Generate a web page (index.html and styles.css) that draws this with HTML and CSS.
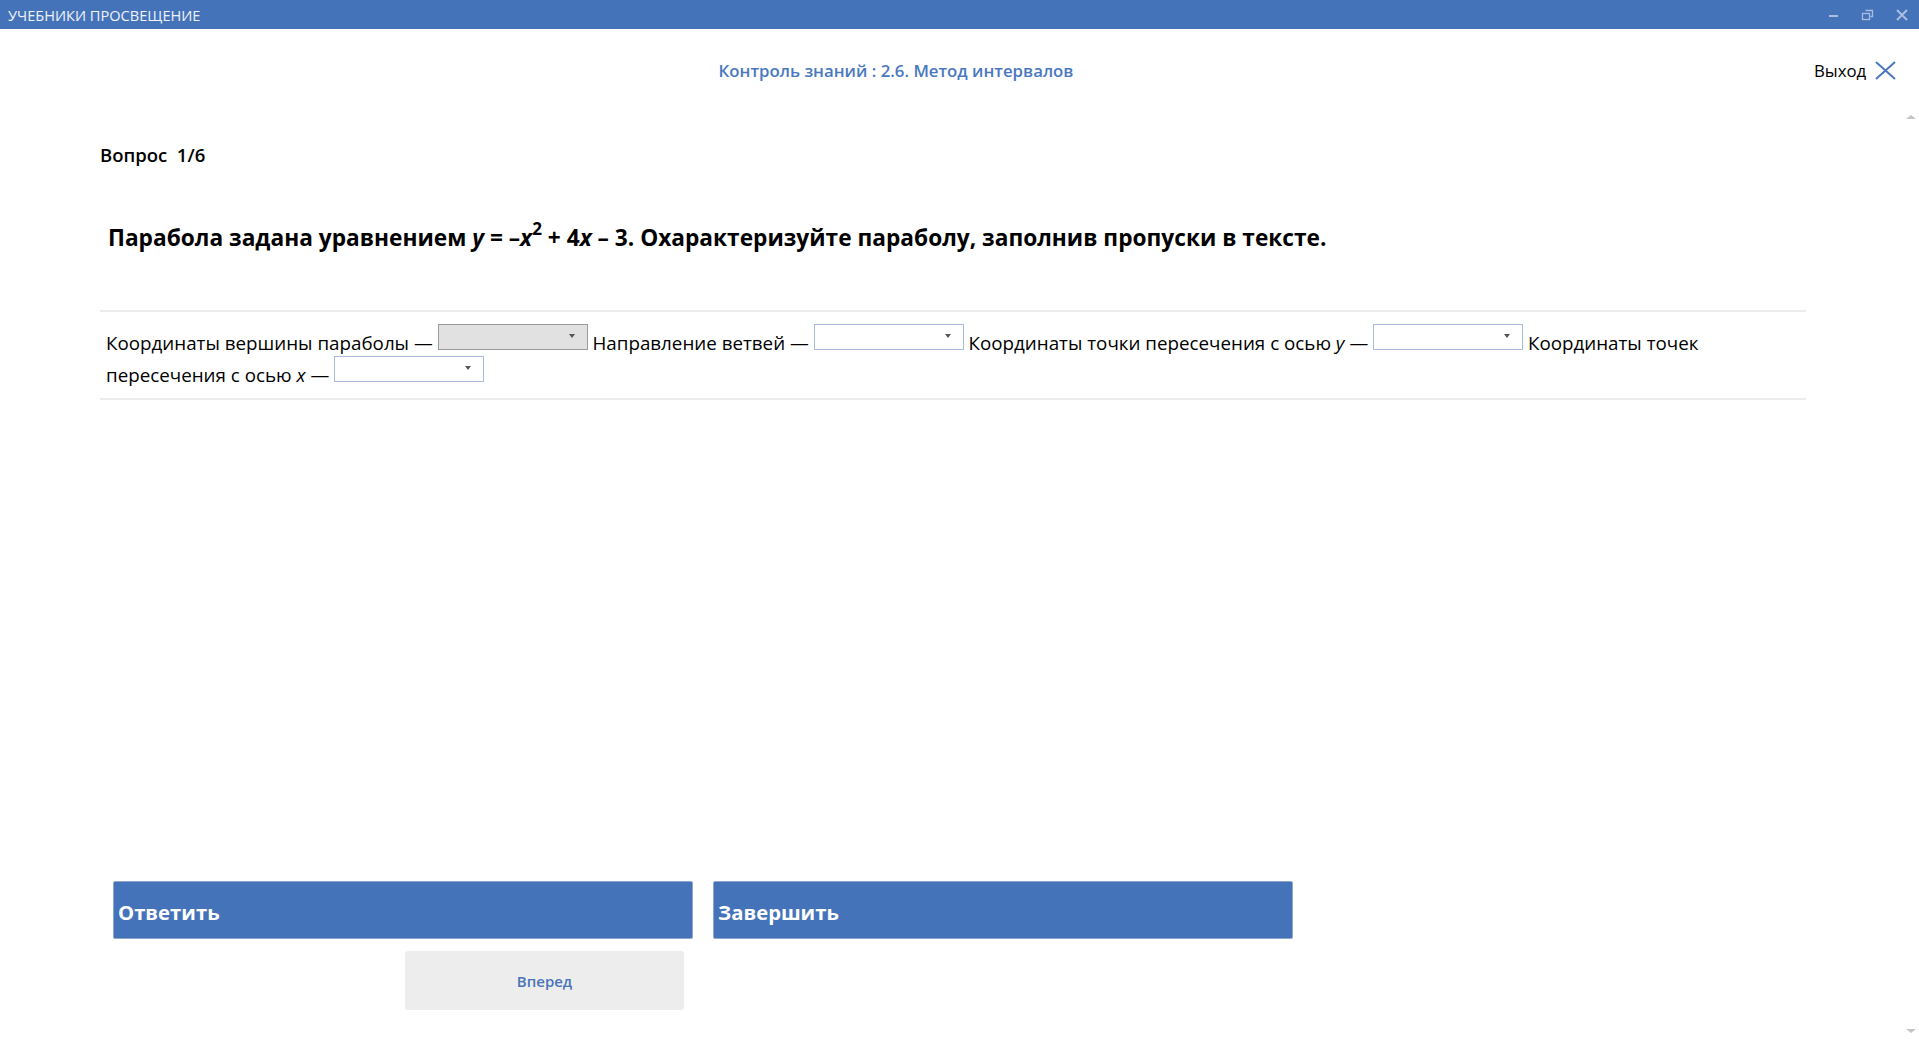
FILE: index.html
```html
<!DOCTYPE html>
<html lang="ru">
<head>
<meta charset="utf-8">
<title>Учебники Просвещение</title>
<link rel="stylesheet" href="styles.css">
</head>
<body>
<div class="app">
  <div class="titlebar">
    <span class="app-name">УЧЕБНИКИ ПРОСВЕЩЕНИЕ</span>
    <div class="win-controls">
      <svg class="wc" width="14" height="14" viewBox="0 0 14 14"><rect x="2" y="7" width="9" height="2" fill="#a9bee0"/></svg>
      <svg class="wc" width="14" height="14" viewBox="0 0 14 14"><path d="M4.5 2.5h7v6h-2" fill="none" stroke="#a9bee0" stroke-width="1.3"/><rect x="1.5" y="5.5" width="7" height="6" fill="none" stroke="#a9bee0" stroke-width="1.3"/></svg>
      <svg class="wc" width="14" height="14" viewBox="0 0 14 14"><path d="M2 2l10 10M12 2L2 12" stroke="#a9bee0" stroke-width="2"/></svg>
    </div>
  </div>

  <div class="header">
    <div class="header-title">Контроль знаний : 2.6. Метод интервалов</div>
    <div class="exit">
      <span>Выход</span>
      <svg width="21" height="19" viewBox="0 0 21 19"><path d="M1 1l19 17M20 1L1 18" stroke="#4a78c0" stroke-width="2" fill="none"/></svg>
    </div>
  </div>

  <main class="content">
    <div class="q-num">Вопрос&nbsp; 1/6</div>
    <div class="q-text">Парабола задана уравнением <i>y</i> = –<i>x</i><sup>2</sup> + 4<i>x</i> – 3. Охарактеризуйте параболу, заполнив пропуски в тексте.</div>
    <div class="fill">Координаты вершины параболы — <span class="sel sel-active"></span> Направление ветвей — <span class="sel"></span> Координаты точки пересечения с осью <i>y</i> — <span class="sel"></span> Координаты точек пересечения с осью <i>x</i> — <span class="sel"></span></div>

    <div class="actions">
      <div class="btn-row">
        <button class="btn-main">Ответить</button>
        <button class="btn-main">Завершить</button>
      </div>
      <button class="btn-next">Вперед</button>
    </div>
  </main>

  <div class="scroll-up"></div>
  <div class="scroll-down"></div>
</div>
</body>
</html>
```

FILE: styles.css
```css
* { box-sizing: border-box; }
html, body { margin: 0; padding: 0; }
body {
  font-family: "Open Sans", "Noto Sans", "DejaVu Sans", sans-serif;
  background: #ffffff;
  color: #000;
}
.app {
  position: relative;
  height: 1040px;
  display: flex;
  flex-direction: column;
  overflow: hidden;
}
.titlebar {
  height: 29px;
  background: #4573b9;
  display: flex;
  align-items: center;
  justify-content: space-between;
  padding: 0 8px 0 8px;
  flex: none;
}
.app-name {
  color: #eef2fa;
  font-size: 14.6px;
}
.win-controls {
  display: flex;
  gap: 20px;
  align-items: center;
  padding-right: 2px;
}
.wc { display: block; }

.header {
  height: 82px;
  display: flex;
  align-items: center;
  flex: none;
}
.header-title {
  width: 1792px;
  text-align: center;
  color: #4a78c0;
  font-size: 16.8px;
  font-weight: 600;
}
.exit {
  display: flex;
  align-items: center;
  gap: 9px;
  margin-left: 22px;
  font-size: 16.8px;
  padding-top: 1px;
}
.exit svg { display: block; }

.content {
  flex: 1;
  display: flex;
  flex-direction: column;
  padding: 0 113px 30px 100px;
}
.q-num {
  margin-top: 32px;
  font-size: 18.5px;
  font-weight: 600;
  line-height: 24px;
}
.q-text {
  margin-top: 56px;
  padding-left: 8px;
  font-size: 22.7px;
  font-weight: 700;
  line-height: 30px;
}
.q-text sup {
  font-size: 17px;
  line-height: 0;
  vertical-align: 11px;
}
.fill {
  margin-top: 57px;
  border-top: 2px solid #ececec;
  border-bottom: 2px solid #ececec;
  padding: 14.5px 0 7.5px 6px;
  font-size: 18.8px;
  line-height: 32px;
}
.sel {
  position: relative;
  display: inline-block;
  width: 150px;
  height: 26px;
  margin-top: -5px;
  border: 1px solid #a9bbdb;
  background: #fff;
  vertical-align: 0;
}
.sel::after {
  content: "";
  position: absolute;
  right: 12px;
  top: 9px;
  border-left: 3px solid transparent;
  border-right: 3px solid transparent;
  border-top: 4px solid #555;
}
.sel-active {
  background: #e1e1e1;
  border-color: #9a9a9a;
}

.actions {
  margin-top: auto;
  padding-left: 13px;
  display: flex;
  flex-direction: column;
  gap: 12px;
}
.btn-row {
  display: flex;
  gap: 20px;
}
.btn-main {
  width: 580px;
  height: 58px;
  background: #4573b9;
  border: 1px solid #8ea6cc;
  border-radius: 2px;
  color: #fff;
  font-family: inherit;
  font-size: 20.3px;
  font-weight: 700;
  text-align: left;
  padding: 4px 0 0 4px;
}
.btn-next {
  margin-left: 292px;
  width: 279px;
  height: 59px;
  background: #ededed;
  border: none;
  border-radius: 3px;
  color: #4a74b8;
  font-family: inherit;
  font-size: 15px;
  font-weight: 600;
}

.scroll-up, .scroll-down {
  position: absolute;
  right: 3px;
  width: 0;
  height: 0;
  border-left: 5px solid transparent;
  border-right: 5px solid transparent;
}
.scroll-up {
  top: 115px;
  border-bottom: 4px solid #c4c4c4;
}
.scroll-down {
  top: 1029px;
  border-top: 4px solid #c4c4c4;
}
```
